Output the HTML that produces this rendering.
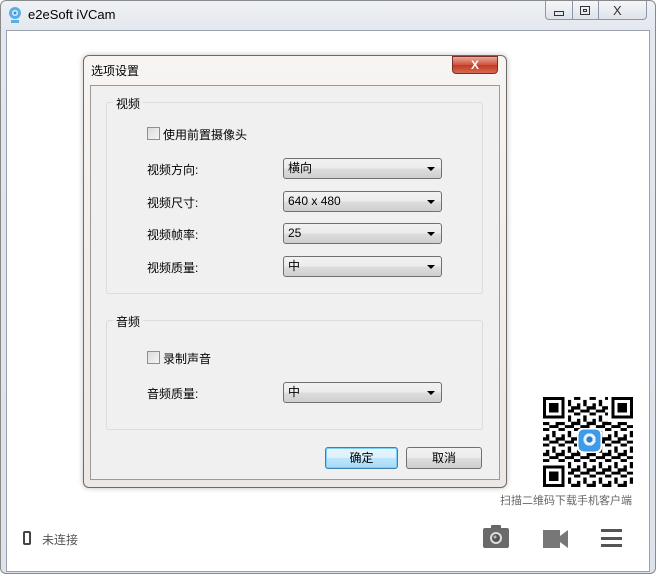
<!DOCTYPE html>
<html><head><meta charset="utf-8"><style>
*{margin:0;padding:0;box-sizing:border-box}
body{width:656px;height:574px;background:#fff;font-family:"Liberation Sans","Noto Sans CJK SC",sans-serif;font-size:12px;color:#000;position:relative;overflow:hidden}
.abs{position:absolute}
#win{left:0;top:0;width:656px;height:574px;border:1px solid #8a8a8a;border-radius:6px;background:linear-gradient(#eef1f5,#e3e8ee 30px,#dde3ea)}
#client{left:6px;top:30px;width:644px;height:542px;background:#fff;border:1px solid #9aa3ad}
.dlg{left:83px;top:55px;width:424px;height:433px;border:1px solid #6b6b6b;border-radius:6px;background:linear-gradient(#f7f4f2,#ece8e6);box-shadow:0 0 6px rgba(0,0,0,.25)}
.inner{left:90px;top:85px;width:410px;height:395px;background:#f0f0f0;border:1px solid #9a9a9a}
.grp{border:1px solid #dcdcdc;border-radius:3px}
.lbl{font-size:12px;color:#000}
.combo{width:159px;height:21px;border:1px solid #707070;border-radius:3px;background:linear-gradient(#f2f2f2,#ebebeb 50%,#dddddd 51%,#cfcfcf);font-size:12px;padding:2px 4px;line-height:15px}
.combo:after{content:"";position:absolute;right:6px;top:8px;border-left:4px solid transparent;border-right:4px solid transparent;border-top:4px solid #000}
.cb{width:13px;height:13px;border:1px solid #8f8f8f;background:linear-gradient(135deg,#dcdcdc,#f5f5f5)}
.btn{height:22px;border:1px solid #707070;border-radius:3px;background:linear-gradient(#f2f2f2,#ebebeb 50%,#dddddd 51%,#cfcfcf);text-align:center;line-height:20px;font-size:12px}
</style></head><body>
<div id="win" class="abs"></div>
<svg class="abs" style="left:8px;top:6px" width="14" height="18" viewBox="0 0 14 18"><circle cx="7" cy="7" r="6" fill="#5aaee8"/><circle cx="7" cy="7" r="3" fill="#dff0fb"/><circle cx="7" cy="7" r="1.5" fill="#3a8fd0"/><rect x="3" y="14" width="8" height="3" fill="#5aaee8"/></svg>
<div class="abs" style="left:28px;top:7px;font-size:13px;color:#000">e2eSoft iVCam</div>
<div class="abs" style="left:545px;top:1px;width:102px;height:19px;border:1px solid #8d96a2;border-top:none;border-radius:0 0 4px 4px;background:linear-gradient(#f4f6f8,#dfe4ea)"></div>
<div class="abs" style="left:572px;top:1px;width:1px;height:19px;background:#8d96a2"></div>
<div class="abs" style="left:598px;top:1px;width:1px;height:19px;background:#8d96a2"></div>
<div class="abs" style="left:554px;top:11px;width:10px;height:5px;border:1px solid #333"></div>
<div class="abs" style="left:580px;top:6px;width:10px;height:9px;border:1px solid #333"><div style="margin:2px;width:4px;height:3px;border:1px solid #333"></div></div>
<div class="abs" style="left:613px;top:3px;font-size:13px;color:#333">X</div>
<div id="client" class="abs"></div>

<div class="abs dlg"></div>
<div class="abs" style="left:91px;top:62px;font-size:12px">选项设置</div>
<div class="abs" style="left:452px;top:56px;width:46px;height:18px;border:1px solid #7a2e25;border-radius:0 0 4px 4px;background:linear-gradient(#e9a79a,#d0513b 50%,#c23a22 51%,#d56a52);color:#fff;text-align:center;font-weight:bold;font-size:12px;line-height:16px">X</div>
<div class="abs inner"></div>
<div class="abs grp" style="left:106px;top:102px;width:377px;height:192px"></div>
<div class="abs lbl" style="left:113px;top:95px;background:#f0f0f0;padding:0 3px">视频</div>
<div class="abs cb" style="left:147px;top:127px"></div>
<div class="abs lbl" style="left:163px;top:126px">使用前置摄像头</div>
<div class="abs lbl" style="left:147px;top:161px">视频方向:</div>
<div class="abs combo" style="left:283px;top:158px">横向</div>
<div class="abs lbl" style="left:147px;top:194px">视频尺寸:</div>
<div class="abs combo" style="left:283px;top:191px">640 x 480</div>
<div class="abs lbl" style="left:147px;top:226px">视频帧率:</div>
<div class="abs combo" style="left:283px;top:223px">25</div>
<div class="abs lbl" style="left:147px;top:259px">视频质量:</div>
<div class="abs combo" style="left:283px;top:256px">中</div>
<div class="abs grp" style="left:106px;top:320px;width:377px;height:110px"></div>
<div class="abs lbl" style="left:113px;top:313px;background:#f0f0f0;padding:0 3px">音频</div>
<div class="abs cb" style="left:147px;top:351px"></div>
<div class="abs lbl" style="left:163px;top:350px">录制声音</div>
<div class="abs lbl" style="left:147px;top:385px">音频质量:</div>
<div class="abs combo" style="left:283px;top:382px">中</div>
<div class="abs btn" style="left:325px;top:447px;width:73px;border-color:#3c7fb1;background:linear-gradient(#eaf6fd,#d9f0fc 50%,#bee6fd 51%,#a7d9f5);box-shadow:inset 0 0 0 1px #7ad0f7">确定</div>
<div class="abs btn" style="left:406px;top:447px;width:76px">取消</div>

<svg class="abs" style="left:543px;top:397px" width="90" height="90" viewBox="0 0 29 29" shape-rendering="crispEdges">
<defs><pattern id="n" width="5" height="5" patternUnits="userSpaceOnUse"><rect width="5" height="5" fill="#fff"/><rect x="0" y="0" width="2" height="1" fill="#000"/><rect x="3" y="1" width="1" height="2" fill="#000"/><rect x="1" y="2" width="1" height="2" fill="#000"/><rect x="4" y="3" width="1" height="2" fill="#000"/><rect x="2" y="4" width="2" height="1" fill="#000"/><rect x="0" y="3" width="1" height="1" fill="#000"/></pattern></defs>
<rect width="29" height="29" fill="url(#n)"/>
<g fill="#000"><rect x="0" y="0" width="8" height="8" fill="#fff"/><rect x="0" y="0" width="7" height="7"/><rect x="1" y="1" width="5" height="5" fill="#fff"/><rect x="2" y="2" width="3" height="3"/>
<rect x="21" y="0" width="8" height="8" fill="#fff"/><rect x="22" y="0" width="7" height="7"/><rect x="23" y="1" width="5" height="5" fill="#fff"/><rect x="24" y="2" width="3" height="3"/>
<rect x="0" y="21" width="8" height="8" fill="#fff"/><rect x="0" y="22" width="7" height="7"/><rect x="1" y="23" width="5" height="5" fill="#fff"/><rect x="2" y="24" width="3" height="3"/></g>
<rect x="11" y="10" width="8" height="8" rx="1.5" fill="#fff"/><rect x="11.5" y="10.5" width="7" height="7" rx="1.5" fill="#3d9be9"/><circle cx="15" cy="13.7" r="2" fill="#e8f4fd"/><circle cx="15" cy="13.7" r="1" fill="#2b7fc8"/>
</svg>
<div class="abs" style="left:500px;top:492px;font-size:11px;color:#666">扫描二维码下载手机客户端</div>

<div class="abs" style="left:23px;top:531px;width:8px;height:14px;border:2px solid #444;border-radius:2px"></div>
<div class="abs" style="left:42px;top:531px;font-size:12px;color:#555">未连接</div>
<svg class="abs" style="left:483px;top:525px" width="26" height="24" viewBox="0 0 26 24"><rect x="8" y="0" width="10" height="4" rx="1" fill="#666"/><rect x="0" y="3" width="26" height="20" rx="2" fill="#6a6a6a"/><circle cx="13" cy="13" r="6" fill="#ddd"/><circle cx="13" cy="13" r="4" fill="#555"/><circle cx="12" cy="12" r="1.5" fill="#bbb"/></svg>
<svg class="abs" style="left:543px;top:530px" width="25" height="18" viewBox="0 0 25 18"><rect x="0" y="0" width="17" height="18" fill="#777"/><path d="M17 6L25 0V18L17 12Z" fill="#777"/></svg>
<div class="abs" style="left:601px;top:529px;width:21px;height:3px;background:#555;box-shadow:0 8px 0 #555,0 15px 0 #555"></div>
</body></html>
